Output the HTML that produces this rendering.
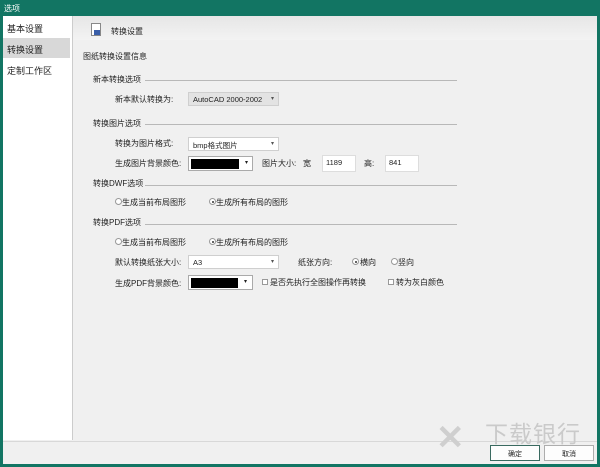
<!DOCTYPE html>
<html><head><meta charset="utf-8"><style>
*{margin:0;padding:0;box-sizing:border-box}
body{width:600px;height:467px;overflow:hidden;background:#f0f0f0;font-family:"Liberation Sans","Noto Sans CJK SC",sans-serif;font-size:8px;color:#222;position:relative}
.a{position:absolute;white-space:nowrap}
.t{position:absolute;left:0;top:0;width:600px;height:16px;background:#127563;color:#fff;font-size:8px;padding:3px 0 0 4px}
.left{position:absolute;left:3px;top:16px;width:69px;height:424px;background:#fff}
.hdr{position:absolute;left:73px;top:16px;width:524px;height:24px;background:linear-gradient(#e6e6e6,#f3f3f3)}
.ln{position:absolute;height:1px;background:#b8b8b8}
.dd{position:absolute;background:#fff;border:1px solid #cfcfcf;font-size:7.5px;padding:2px 4px}
.dd:after{content:"▾";position:absolute;right:4px;top:2px;font-size:6px;color:#555}
.cb{position:absolute;background:#fff;border:1px solid #aaa}
.cb i{position:absolute;left:2px;top:2px;width:50px;height:10px;background:#000}
.r{position:absolute;width:7px;height:7px;border:1px solid #999;border-radius:50%;background:#fff}
.r.on:after{content:"";position:absolute;left:1.5px;top:1.5px;width:2px;height:2px;border-radius:50%;background:#333}
.btn{position:absolute;background:#fdfdfd;border:1px solid #adadad;font-size:7px;text-align:center;padding-top:3px}
</style></head><body>
<div class="t">选项</div>
<div style="position:absolute;left:0;top:16px;width:3px;height:451px;background:#127563"></div>
<div style="position:absolute;right:0;top:16px;width:3px;height:451px;background:#127563"></div>
<div style="position:absolute;left:0;bottom:0;width:600px;height:3px;background:#127563"></div>
<div class="left"></div>
<div class="a" style="left:72px;top:16px;width:1px;height:424px;background:#ccc"></div>
<div class="a" style="left:3px;top:38px;width:67px;height:20px;background:#d8d8d8"></div>
<div class="a" style="left:7px;top:22px;font-size:9px">基本设置</div>
<div class="a" style="left:7px;top:43px;font-size:9px">转换设置</div>
<div class="a" style="left:7px;top:64px;font-size:9px">定制工作区</div>
<div class="hdr"></div>
<div class="a" style="left:91px;top:23px;width:10px;height:13px;background:#fff;border:1px solid #888"></div>
<div class="a" style="left:94px;top:30px;width:6px;height:5px;background:#3a5ea8"></div>
<div class="a" style="left:111px;top:26px">转换设置</div>
<div class="a" style="left:83px;top:51px">图纸转换设置信息</div>
<div class="a" style="left:93px;top:74px">新本转换选项</div><div class="ln" style="left:145px;top:80px;width:312px"></div>
<div class="a" style="left:115px;top:94px">新本默认转换为:</div>
<div class="dd" style="left:188px;top:92px;width:91px;height:14px;background:#e3e3e3">AutoCAD 2000-2002</div>
<div class="a" style="left:93px;top:118px">转换图片选项</div><div class="ln" style="left:145px;top:124px;width:312px"></div>
<div class="a" style="left:115px;top:138px">转换为图片格式:</div>
<div class="dd" style="left:188px;top:137px;width:91px;height:14px">bmp格式图片</div>
<div class="a" style="left:115px;top:158px">生成图片背景颜色:</div>
<div class="cb" style="left:188px;top:156px;width:65px;height:15px"><i style="width:48px"></i></div>
<div class="a" style="left:245px;top:159px;font-size:6px">▾</div>
<div class="a" style="left:262px;top:158px">图片大小:</div>
<div class="a" style="left:303px;top:158px">宽</div>
<div class="cb" style="left:322px;top:155px;width:34px;height:17px;border-color:#ddd;padding:2px 3px;font-size:7.5px">1189</div>
<div class="a" style="left:364px;top:158px">高:</div>
<div class="cb" style="left:385px;top:155px;width:34px;height:17px;border-color:#ddd;padding:2px 3px;font-size:7.5px">841</div>
<div class="a" style="left:93px;top:178px">转换DWF选项</div><div class="ln" style="left:145px;top:185px;width:312px"></div>
<div class="r" style="left:115px;top:198px"></div><div class="a" style="left:122px;top:197px">生成当前布局图形</div>
<div class="r on" style="left:209px;top:198px"></div><div class="a" style="left:216px;top:197px">生成所有布局的图形</div>
<div class="a" style="left:93px;top:217px">转换PDF选项</div><div class="ln" style="left:145px;top:224px;width:312px"></div>
<div class="r" style="left:115px;top:238px"></div><div class="a" style="left:122px;top:237px">生成当前布局图形</div>
<div class="r on" style="left:209px;top:238px"></div><div class="a" style="left:216px;top:237px">生成所有布局的图形</div>
<div class="a" style="left:115px;top:257px">默认转换纸张大小:</div>
<div class="dd" style="left:188px;top:255px;width:91px;height:14px">A3</div>
<div class="a" style="left:298px;top:257px">纸张方向:</div>
<div class="r on" style="left:352px;top:258px"></div><div class="a" style="left:360px;top:257px">横向</div>
<div class="r" style="left:391px;top:258px"></div><div class="a" style="left:398px;top:257px">竖向</div>
<div class="a" style="left:115px;top:278px">生成PDF背景颜色:</div>
<div class="cb" style="left:188px;top:275px;width:65px;height:15px"><i style="width:47px"></i></div>
<div class="a" style="left:244px;top:278px;font-size:6px">▾</div>
<div class="a" style="left:262px;top:279px;width:6px;height:6px;border:1px solid #999;background:#fff"></div>
<div class="a" style="left:270px;top:277px">是否先执行全图操作再转换</div>
<div class="a" style="left:388px;top:279px;width:6px;height:6px;border:1px solid #999;background:#fff"></div>
<div class="a" style="left:396px;top:277px">转为灰白颜色</div>
<div class="ln" style="left:3px;top:441px;width:594px;background:#d8d8d8"></div>
<div class="a" style="left:436px;top:418px;font-size:34px;line-height:40px;color:#cfcfcf;font-weight:bold">✕</div>
<div class="a" style="left:485px;top:421px;font-size:23px;line-height:26px;color:#cacaca;letter-spacing:1px">下载银行</div>
<div class="btn" style="left:490px;top:445px;width:50px;height:16px;border-color:#3a6a60">确定</div>
<div class="btn" style="left:544px;top:445px;width:50px;height:16px">取消</div>
</body></html>
